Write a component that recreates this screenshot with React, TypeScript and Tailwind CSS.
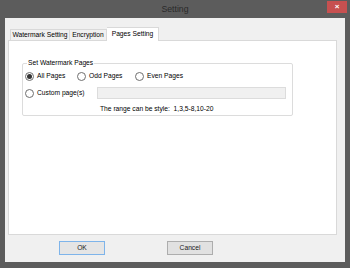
import React from "react";

const font = { fontFamily: '"Liberation Sans", Arial, sans-serif' };

function Radio({ checked }: { checked?: boolean }) {
  return (
    <span className="w-[9px] h-[9px] rounded-full border border-[#6f6f6f] bg-white flex items-center justify-center shrink-0">
      {checked && <span className="w-[5px] h-[5px] rounded-full bg-[#333333]" />}
    </span>
  );
}

function Option({ label, checked, w }: { label: string; checked?: boolean; w: string }) {
  return (
    <div className={`flex items-center gap-[3px] ${w}`}>
      <Radio checked={checked} />
      <span>{label}</span>
    </div>
  );
}

export default function App() {
  return (
    <div className="w-[350px] h-[268px] bg-[#5c5c5c] flex flex-col text-[6.7px] text-black leading-none" style={font}>
      {/* Title bar */}
      <div className="h-[18px] relative flex items-center justify-center">
        <span className="text-[8.7px] text-[#2a2a2a]">Setting</span>
        <div className="absolute right-[3px] top-[1px] w-[20px] h-[12px] bg-[#c75050] flex items-center justify-center text-white text-[8px] font-bold">
          ×
        </div>
      </div>

      {/* Client area */}
      <div className="mx-[5px] mb-[6px] flex-1 bg-[#f0f0f0] flex flex-col">
        {/* Tabs */}
        <div className="pt-[9px] pl-[5px] flex items-end h-[22px]">
          <div className="w-[60px] h-[11px] border border-b-0 border-[#d9d9d9] bg-[#f0f0f0] flex items-center justify-center">
            Watermark Setting
          </div>
          <div className="w-[37px] h-[11px] border border-l-0 border-b-0 border-[#d9d9d9] bg-[#f0f0f0] flex items-center justify-center">
            Encryption
          </div>
          <div className="w-[52px] h-[14px] -mb-[1px] relative z-10 border border-l-0 border-b-0 border-[#d9d9d9] bg-white flex items-center justify-center">
            Pages Setting
          </div>
        </div>

        {/* Tab panel */}
        <div className="ml-[3px] w-[329px] h-[195px] bg-white border border-[#d9d9d9] pt-[22px] pl-[13px]">
          <div className="relative w-[271px] h-[53px] border border-[#dcdcdc] rounded-[2px] pt-[7px] pl-[2px]">
            <span className="absolute left-[4px] -top-[4px] bg-white px-[1px]">Set Watermark Pages</span>
            <div className="flex items-center h-[10px]">
              <Option label="All Pages" checked w="w-[52px]" />
              <Option label="Odd Pages" w="w-[58px]" />
              <Option label="Even Pages" w="w-[60px]" />
            </div>
            <div className="flex items-center h-[12px] mt-[6px]">
              <Option label="Custom page(s)" w="w-[72px]" />
              <div className="w-[189px] h-[12px] bg-[#f0f0f0] border border-[#dcdcdc]" />
            </div>
            <div className="mt-[6px] pl-[75px] h-[9px] flex items-center">
              The range can be style:&nbsp; 1,3,5-8,10-20
            </div>
          </div>
        </div>

        {/* Buttons */}
        <div className="flex mt-[6px] ml-[54px] gap-[62px]">
          <button className="w-[46px] h-[14px] bg-[#e5e5e5] border border-[#7eb4ea] flex items-center justify-center text-[6.7px] text-[#1a1a1a]">
            OK
          </button>
          <button className="w-[46px] h-[14px] bg-[#e1e1e1] border border-[#adadad] flex items-center justify-center text-[6.7px] text-[#1a1a1a]">
            Cancel
          </button>
        </div>
      </div>
    </div>
  );
}
